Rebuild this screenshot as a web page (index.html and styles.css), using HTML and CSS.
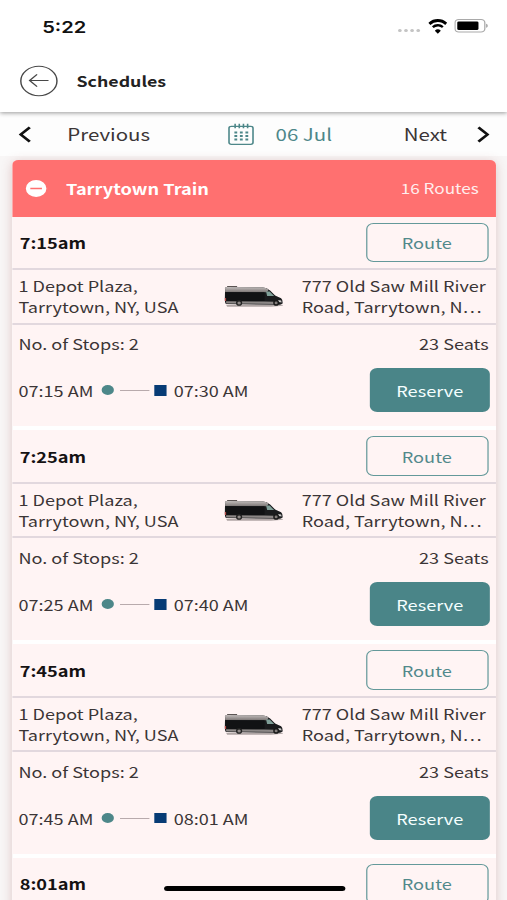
FILE: index.html
```
<!DOCTYPE html>
<html lang="en">
<head>
<meta charset="utf-8">
<title>Schedules</title>
<link rel="stylesheet" href="styles.css">
</head>
<body>
<svg width="0" height="0" class="defs" aria-hidden="true">
  <defs>
    <linearGradient id="roof" x1="0" y1="0" x2="0" y2="1">
      <stop offset="0" stop-color="#c2bdbc"/>
      <stop offset="1" stop-color="#7d7776"/>
    </linearGradient>
    <symbol id="van" viewBox="0 0 60 24" preserveAspectRatio="none">
      <path d="M2 20.800h56l1 .9-12 1.100H3z" fill="#8f8583" opacity=".7"/>
      <path d="M3 1.900h10v1.200H3z" fill="#5b5453"/>
      <path d="M1 4.200 Q1.200 3 3 3 L38 3.200 Q43 3.500 46 6.400 L51 11.400 L57 14.200 Q58.700 15.500 58.500 19.600 L56 20.800 L2 20 Q.6 19 .7 14z" fill="#1a1b1d"/>
      <path d="M1 4.200 Q1.200 3 3 3 L38 3.200 Q42 3.500 44.500 5.400 L43 8.200 L1 8z" fill="url(#roof)"/>
      <path d="M2 17.200 L40 17.600 L50 17.800 L50 20 L2 19.400z" fill="#8c8786"/>
      <path d="M1.500 8.300h39v8.600H1.500z" fill="#111214"/>
      <path d="M42 7.600 L45.500 7.600 L50 12.100 L43 12z" fill="#7f9f98"/>
      <path d="M.7 14h1.300v3H.7z" fill="#b64b48"/>
      <path d="M54 16l3 .6.6 1.800-3-.5z" fill="#c9c7c6"/>
      <ellipse cx="15" cy="18.900" rx="3.100" ry="2.800" fill="#222"/>
      <ellipse cx="15" cy="18.900" rx="1.700" ry="1.500" fill="#908a88"/>
      <ellipse cx="52" cy="18.900" rx="2.900" ry="2.800" fill="#191919"/>
      <ellipse cx="52" cy="18.900" rx="1.500" ry="1.400" fill="#837d7b"/>
    </symbol>
  </defs>
</svg>
<div class="screen">
  <div class="status">
    <span class="clock">5:22</span>
    <span class="dots"><i></i><i></i><i></i><i></i></span>
    <svg class="wifi" viewBox="0 0 16 12" preserveAspectRatio="none"><path d="M8 2.400c2.200 0 4.200.9 5.700 2.300l1.300-1.400a.4.4 0 0 0 0-.5A10.200 10.200 0 0 0 1 2.800a.4.4 0 0 0 0 .5l1.300 1.400A8.300 8.300 0 0 1 8 2.400z"/><path d="M8 6c1.200 0 2.300.450 3.200 1.200l1.300-1.400a6.600 6.600 0 0 0-9 0l1.300 1.400A4.900 4.900 0 0 1 8 6z"/><path d="M8 11.800l2.300-2.500a3.300 3.300 0 0 0-4.600 0z"/></svg>
    <svg class="battery" viewBox="0 0 27 13"><rect x=".5" y=".5" width="23.500" height="12" rx="3" fill="none" stroke="#a9a9a9"/><rect x="2.300" y="2.300" width="16.700" height="8.400" rx="1.200"/><path d="M25 4.500v4c1.800-.7 1.800-3.300 0-4z" fill="#a9a9a9"/></svg>
  </div>
  <header class="header">
    <svg class="back" viewBox="0 0 32 32"><circle cx="16" cy="16" r="15" /><path d="M24 15.500H8.500M14.500 9.300 8.300 15.500l6.200 6.200"/></svg>
    <h1>Schedules</h1>
  </header>
  <nav class="days">
    <svg class="chevron" viewBox="0 0 10 16"><path d="M8.600 1.200 1.700 8l6.900 6.800"/></svg>
    <span class="prev">Previous</span>
    <svg class="calendar" viewBox="0 0 22 22"><rect x="1" y="2.800" width="19.600" height="18" rx="1.800"/><path d="M6 .3v4.500M9.400 .3v4.500M12.800 .3v4.500M16.200 .3v4.500"/><path class="grid" d="M5.400 9h11.500M5.400 12.500h11.500M5.400 16h11.500"/></svg>
    <span class="date">06 Jul</span>
    <span class="next">Next</span>
    <svg class="chevron" viewBox="0 0 10 16"><path d="M1.400 1.200 8.300 8l-6.900 6.800"/></svg>
  </nav>
  <main class="list">
    <section class="card">
      <div class="group">
        <svg class="minus" viewBox="0 0 20 20"><circle cx="10" cy="10" r="9.600"/><path d="M5 10h10"/></svg>
        <h2>Tarrytown Train</h2>
        <span class="count">16 Routes</span>
      </div>
      <article class="trip">
        <div class="top"><strong>7:15am</strong><button class="route">Route</button></div>
        <div class="places"><p>1 Depot Plaza,<br>Tarrytown, NY, USA</p><svg class="van"><use href="#van"/></svg><p class="to">777 Old Saw Mill River<br>Road, Tarrytown, N…</p></div>
        <div class="info"><span>No. of Stops: 2</span><span>23 Seats</span></div>
        <div class="bottom"><span class="time">07:15 AM</span><i class="start"></i><i class="line"></i><i class="end"></i><span>07:30 AM</span><button class="reserve">Reserve</button></div>
      </article>
      <article class="trip">
        <div class="top"><strong>7:25am</strong><button class="route">Route</button></div>
        <div class="places"><p>1 Depot Plaza,<br>Tarrytown, NY, USA</p><svg class="van"><use href="#van"/></svg><p class="to">777 Old Saw Mill River<br>Road, Tarrytown, N…</p></div>
        <div class="info"><span>No. of Stops: 2</span><span>23 Seats</span></div>
        <div class="bottom"><span class="time">07:25 AM</span><i class="start"></i><i class="line"></i><i class="end"></i><span>07:40 AM</span><button class="reserve">Reserve</button></div>
      </article>
      <article class="trip">
        <div class="top"><strong>7:45am</strong><button class="route">Route</button></div>
        <div class="places"><p>1 Depot Plaza,<br>Tarrytown, NY, USA</p><svg class="van"><use href="#van"/></svg><p class="to">777 Old Saw Mill River<br>Road, Tarrytown, N…</p></div>
        <div class="info"><span>No. of Stops: 2</span><span>23 Seats</span></div>
        <div class="bottom"><span class="time">07:45 AM</span><i class="start"></i><i class="line"></i><i class="end"></i><span>08:01 AM</span><button class="reserve">Reserve</button></div>
      </article>
      <article class="trip">
        <div class="top"><strong>8:01am</strong><button class="route">Route</button></div>
      </article>
    </section>
  </main>
  <div class="home"></div>
</div>
</body>
</html>
```
FILE: styles.css
```
* { box-sizing: border-box; margin: 0; padding: 0; }

html, body { width: 507px; height: 900px; overflow: hidden; background: #fff; }

.defs { position: absolute; }

/* A 414px phone layout, widened to fill the window */
.screen {
  position: relative;
  display: flex;
  flex-direction: column;
  width: 414px;
  height: 900px;
  overflow: hidden;
  transform: scaleX(1.22464);
  transform-origin: 0 0;
  font-family: "Noto Sans CJK SC", "Noto Sans", sans-serif;
  font-size: 14.75px;
  line-height: 21px;
  color: #3b3536;
  white-space: nowrap;
}

.status { display: flex; align-items: center; flex: none; height: 52px; padding: 0 15.5px 0 34.5px; }
.clock { font: 600 16.4px/20px Inter, sans-serif; color: #111; flex: 1; padding-top: 1px; }
.dots { display: flex; gap: 2.1px; margin: 9px 5.5px 0 0; }
.dots i { width: 3px; height: 3.4px; border-radius: 50%; background: #c4c4c4; }
.wifi { width: 17px; height: 15px; margin-right: 5px; }
.battery { width: 28px; height: 13.5px; }

.header { display: flex; align-items: center; flex: none; height: 60px; padding: 0 16px 2px; background: #fff; box-shadow: 0 1px 4px rgba(0, 0, 0, .4); clip-path: inset(0 0 -8px 0); z-index: 1; }
.back { width: 31.5px; height: 32px; fill: none; stroke: #484848; stroke-width: 1.2; }
h1 { margin-left: 15px; font-size: 14.5px; line-height: 24px; font-weight: 700; color: #222; }

.days { display: flex; align-items: center; flex: none; height: 44px; padding: 0 14px 0 15px; font-size: 16.7px; line-height: 24px; background: #fdfdfd; }
.chevron { width: 11px; height: 17px; fill: none; stroke: #111; stroke-width: 2.3; }
.prev { width: 130.5px; margin-left: 29px; }
.calendar { width: 22px; height: 23px; fill: none; stroke: #4d8789; stroke-width: 1.3; }
.calendar .grid { stroke-width: 2; stroke-dasharray: 2.3 2.2; }
.date { margin-left: 17.5px; color: #4d8789; }
.next { margin-left: auto; margin-right: 24px; }

.list { flex: 1; padding: 4.4px 9px 0 9.8px; background: #f8f6f6; }
.card { height: 760px; border-radius: 5px 5px 0 0; background: #fff; box-shadow: 0 2px 10px rgba(150, 60, 60, .25); overflow: hidden; }
.group { display: flex; align-items: center; height: 56.3px; padding: 0 14px 0 10px; background: #ff7070; color: #ffeded; font-size: 14px; }
.minus { width: 19px; height: 19px; fill: #fff; stroke: #ff7070; stroke-width: 1.5; }
h2 { flex: 1; margin-left: 15px; font-size: 14.85px; font-weight: 700; color: #fff; }

.trip { height: 209.3px; margin-bottom: 4.5px; background: #fff4f4; }
.top { display: flex; align-items: center; justify-content: space-between; height: 53.5px; padding: 0 6.5px 0 6.3px; border-bottom: 2px solid #e2d8de; }
.top strong { font-size: 14.85px; font-weight: 700; color: #151213; }
button { font: inherit; border-radius: 6px; }
.route { width: 100px; height: 39.5px; border: 1.3px solid #64999a; background: transparent; color: #52898b; font-size: 14.85px; }
.places { display: grid; grid-template-columns: 167.7px 48.3px 1fr; align-items: center; height: 54.5px; padding: 0 5.3px; border-bottom: 2px solid #e2d8de; }
.van { width: 49px; height: 24px; }
.to { margin-left: 15.3px; }
.info { display: flex; justify-content: space-between; padding: 8.4px 6px 0 5.3px; }
.bottom { display: flex; align-items: center; height: 44px; margin-top: 14.4px; padding: 0 5.3px; }
.start { width: 10px; height: 10px; margin-left: 6.3px; border-radius: 50%; background: #4d8789; }
.line { width: 24px; height: 1px; margin: 0 4.3px 0 5px; background: #b8aaac; }
.end { width: 10.5px; height: 10.5px; margin-right: 5.5px; background: #073b75; }
.reserve { width: 97.5px; height: 44px; margin-left: auto; border: 0; background: #4a8588; color: #f5ffff; font-size: 14.85px; }

.home { position: absolute; left: 133.5px; top: 885.5px; width: 148px; height: 5.5px; border-radius: 3px; background: #000; }
```
